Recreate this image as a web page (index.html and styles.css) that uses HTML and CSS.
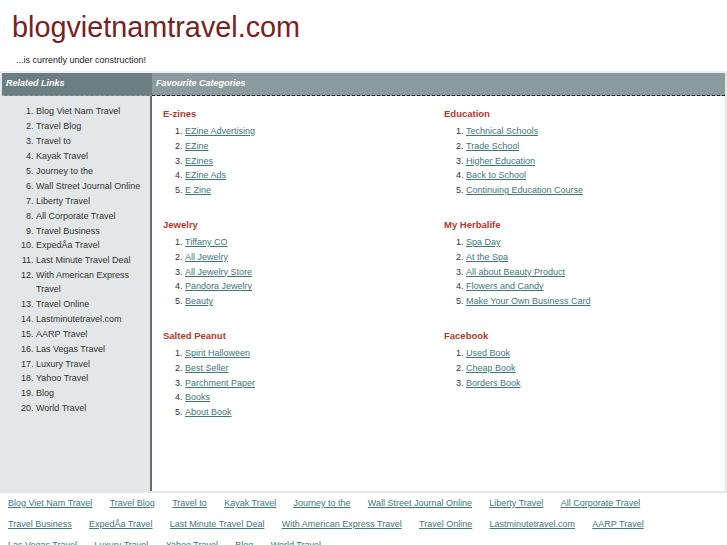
FILE: index.html
```html
<!DOCTYPE html>
<html lang="en">

<head>
    <meta charset="UTF-8">
    <title>blogvietnamtravel.com</title>
    <link rel="stylesheet" href="styles.css">
</head>

<body>
    <div class="top">
        <h1>blogvietnamtravel.com</h1>
        <p class="tagline">...is currently under construction!</p>
    </div>

    <div class="page">
        <div class="bars">
            <div class="bar bar-left">Related Links</div>
            <div class="bar bar-right">Favourite Categories</div>
        </div>
        <div class="cols">
            <div class="sidebar">
                <ol>
                    <li>Blog Viet Nam Travel</li>
                    <li>Travel Blog</li>
                    <li>Travel to</li>
                    <li>Kayak Travel</li>
                    <li>Journey to the</li>
                    <li>Wall Street Journal Online</li>
                    <li>Liberty Travel</li>
                    <li>All Corporate Travel</li>
                    <li>Travel Business</li>
                    <li>ExpedÅa Travel</li>
                    <li>Last Minute Travel Deal</li>
                    <li>With American Express Travel</li>
                    <li>Travel Online</li>
                    <li>Lastminutetravel.com</li>
                    <li>AARP Travel</li>
                    <li>Las Vegas Travel</li>
                    <li>Luxury Travel</li>
                    <li>Yahoo Travel</li>
                    <li>Blog</li>
                    <li>World Travel</li>
                </ol>
            </div>
            <div class="main">
                <div class="cat-grid">
                    <div class="cat">
                        <h3>E-zines</h3>
                        <ol>
                            <li><a href="#">EZine Advertising</a></li>
                            <li><a href="#">EZine</a></li>
                            <li><a href="#">EZines</a></li>
                            <li><a href="#">EZine Ads</a></li>
                            <li><a href="#">E Zine</a></li>
                        </ol>
                    </div>
                    <div class="cat">
                        <h3>Education</h3>
                        <ol>
                            <li><a href="#">Technical Schools</a></li>
                            <li><a href="#">Trade School</a></li>
                            <li><a href="#">Higher Education</a></li>
                            <li><a href="#">Back to School</a></li>
                            <li><a href="#">Continuing Education Course</a></li>
                        </ol>
                    </div>
                    <div class="cat">
                        <h3>Jewelry</h3>
                        <ol>
                            <li><a href="#">Tiffany CO</a></li>
                            <li><a href="#">All Jewelry</a></li>
                            <li><a href="#">All Jewelry Store</a></li>
                            <li><a href="#">Pandora Jewelry</a></li>
                            <li><a href="#">Beauty</a></li>
                        </ol>
                    </div>
                    <div class="cat">
                        <h3>My Herbalife</h3>
                        <ol>
                            <li><a href="#">Spa Day</a></li>
                            <li><a href="#">At the Spa</a></li>
                            <li><a href="#">All about Beauty Product</a></li>
                            <li><a href="#">Flowers and Candy</a></li>
                            <li><a href="#">Make Your Own Business Card</a></li>
                        </ol>
                    </div>
                    <div class="cat">
                        <h3>Salted Peanut</h3>
                        <ol>
                            <li><a href="#">Spirit Halloween</a></li>
                            <li><a href="#">Best Seller</a></li>
                            <li><a href="#">Parchment Paper</a></li>
                            <li><a href="#">Books</a></li>
                            <li><a href="#">About Book</a></li>
                        </ol>
                    </div>
                    <div class="cat">
                        <h3>Facebook</h3>
                        <ol>
                            <li><a href="#">Used Book</a></li>
                            <li><a href="#">Cheap Book</a></li>
                            <li><a href="#">Borders Book</a></li>
                        </ol>
                    </div>
                </div>
            </div>
        </div>
    </div>

    <div class="footer">
        <div class="row">
            <a href="#">Blog Viet Nam Travel</a>
            <a href="#">Travel Blog</a>
            <a href="#">Travel to</a>
            <a href="#">Kayak Travel</a>
            <a href="#">Journey to the</a>
            <a href="#">Wall Street Journal Online</a>
            <a href="#">Liberty Travel</a>
            <a href="#">All Corporate Travel</a>
        </div>
        <div class="row">
            <a href="#">Travel Business</a>
            <a href="#">ExpedÅa Travel</a>
            <a href="#">Last Minute Travel Deal</a>
            <a href="#">With American Express Travel</a>
            <a href="#">Travel Online</a>
            <a href="#">Lastminutetravel.com</a>
            <a href="#">AARP Travel</a>
        </div>
        <div class="row">
            <a href="#">Las Vegas Travel</a>
            <a href="#">Luxury Travel</a>
            <a href="#">Yahoo Travel</a>
            <a href="#">Blog</a>
            <a href="#">World Travel</a>
        </div>
    </div>
</body>

</html>
```

FILE: styles.css
```css
* {
    margin: 0;
    padding: 0;
    box-sizing: border-box;
}

body {
    font-family: "Liberation Sans", Arial, sans-serif;
    font-size: 9px;
    color: #333;
    background: #fff;
}

a {
    color: #3d7777;
}

.top {
    height: 71px;
    padding: 11px 0 0 12px;
}

.top h1 {
    font-size: 28.8px;
    font-weight: normal;
    line-height: 32px;
    color: #7a1e1e;
}

.tagline {
    margin-top: 12px;
    padding-left: 4px;
    line-height: 11px;
    color: #222;
}

.page {
    border: 2px solid #e3e8e8;
    border-top: 2px solid #eef1f1;
}

.bars {
    display: flex;
    height: 23px;
}

.bar {
    color: #fff;
    font-weight: bold;
    font-style: italic;
    line-height: 20px;
    padding-left: 4px;
    border-bottom: 1px dashed #222;
}

.bar-left {
    width: 150px;
    background: #6b7e81;
    border-bottom-color: #8a9698;
}

.bar-right {
    flex: 1;
    background: #8b9a9c;
}

.cols {
    display: flex;
    height: 395px;
}

.sidebar {
    width: 150px;
    background: #e3e7e7;
    border-right: 2px solid #5e6c6d;
    padding-top: 9px;
}

.sidebar ol {
    padding-left: 34px;
}

.sidebar li {
    line-height: 13.5px;
    margin-bottom: 1.45px;
}

.main {
    flex: 1;
    padding: 12px 0 0 11px;
}

.cat-grid {
    display: grid;
    grid-template-columns: 281px 1fr;
}

.cat {
    margin-bottom: 21px;
}

.cat h3 {
    font-size: 9.5px;
    line-height: 12px;
    color: #b2372d;
}

.cat ol {
    margin-top: 4px;
    padding-left: 22px;
}

.cat li {
    line-height: 14.8px;
}

.footer {
    padding: 0 8px;
}

.footer .row {
    display: flex;
    gap: 17.3px;
    line-height: 21px;
}
```
